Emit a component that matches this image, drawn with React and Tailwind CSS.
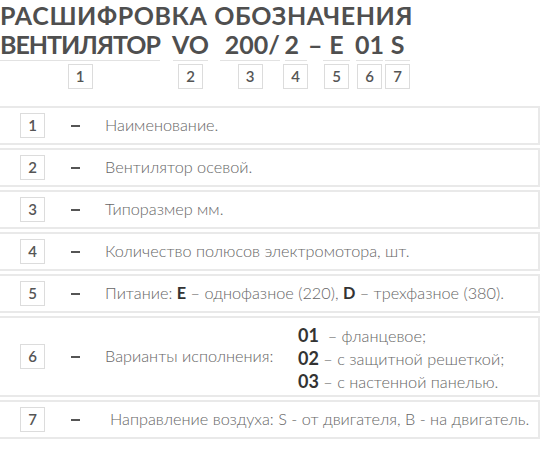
const segments = [
  { text: 'ВЕНТИЛЯТОР', n: 1, w: 'w-[160px]', m: 'mr-[13px]', t: 'justify-center tracking-[-1px]' },
  { text: 'VO', n: 2, w: 'w-[35px]', m: 'mr-[12px]', t: 'justify-center' },
  { text: '200/', n: 3, w: 'w-[60px]', m: 'mr-[3px]', t: 'justify-end' },
  { text: '2', n: 4, w: 'w-[22px]', m: '', t: 'justify-start' },
  { sep: '–' },
  { text: 'E', n: 5, w: 'w-[27px]', m: 'mr-[6px]', t: 'justify-center' },
  { text: '01', n: 6, w: 'w-[27px]', m: 'mr-[2px]', t: 'justify-center' },
  { text: 'S', n: 7, w: 'w-[25px]', m: '', t: 'justify-center' },
];

const rows = [
  { n: 1, text: 'Наименование.' },
  { n: 2, text: 'Вентилятор осевой.' },
  { n: 3, text: 'Типоразмер мм.' },
  { n: 4, text: 'Количество полюсов электромотора, шт.' },
  {
    n: 5,
    text: (
      <>
        Питание: <b className="font-bold text-[#333]">E</b> – однофазное (220), <b className="font-bold text-[#333]">D</b> – трехфазное (380).
      </>
    ),
  },
];

function Box({ n }) {
  return (
    <div className="flex h-[25px] w-[25px] items-center justify-center border border-[#dcdcdc] text-[15px] font-semibold tracking-normal text-[#555]">
      {n}
    </div>
  );
}

function Row({ n, children, tall, indent }) {
  return (
    <div className={`flex items-center border-2 border-[#e9e9e9] ${tall ? 'h-[81px]' : 'h-[39px]'}`}>
      <div className="ml-[20px]">
        <Box n={n} />
      </div>
      <div className="ml-[26px] h-[2px] w-[9px] bg-[#555]" />
      <div className={`${indent ? 'ml-[30px]' : 'ml-[25px]'} flex flex-1 items-center`}>{children}</div>
    </div>
  );
}

export default function App() {
  return (
    <div className="h-[450px] w-[550px] overflow-hidden bg-white font-['Lato',sans-serif]">
      <div className="pt-[1px] text-[25px] font-bold uppercase leading-[29px] text-[#4f4f4f]">
        <div className="tracking-[0.6px]">Расшифровка обозначения</div>
        <div className="flex items-start">
          {segments.map((s, i) =>
            s.sep ? (
              <div key={i} className="w-[15px] pr-[4px] text-center">{s.sep}</div>
            ) : (
              <div key={i} className={`flex flex-col items-center ${s.m}`}>
                <div className={`${s.w} flex whitespace-nowrap ${s.t}`}>{s.text}</div>
                <div className={`${s.w} mt-[1px] h-px bg-[#e2e2e2]`} />
                <div className="mt-[3px]">
                  <Box n={s.n} />
                </div>
              </div>
            )
          )}
        </div>
      </div>

      <div className="mt-[17px] mr-[10px] -ml-[2px] flex flex-col gap-[3px] text-[16.3px] font-light text-[#666]">
        {rows.map((r) => (
          <Row key={r.n} n={r.n}>
            <span className="whitespace-nowrap">{r.text}</span>
          </Row>
        ))}
        <Row n={6} tall>
          <span className="w-[193px] whitespace-nowrap">Варианты исполнения:</span>
          <div className="mt-[4px] flex flex-col leading-[23px]">
            <span className="whitespace-nowrap"><b className="text-[18px] font-bold text-[#333]">01</b>&nbsp; – фланцевое;</span>
            <span className="whitespace-nowrap"><b className="text-[18px] font-bold text-[#333]">02</b> – с защитной решеткой;</span>
            <span className="whitespace-nowrap"><b className="text-[18px] font-bold text-[#333]">03</b> – с настенной панелью.</span>
          </div>
        </Row>
        <Row n={7} indent>
          <span className="whitespace-nowrap">Направление воздуха: S - от двигателя, B - на двигатель.</span>
        </Row>
      </div>
    </div>
  );
}
